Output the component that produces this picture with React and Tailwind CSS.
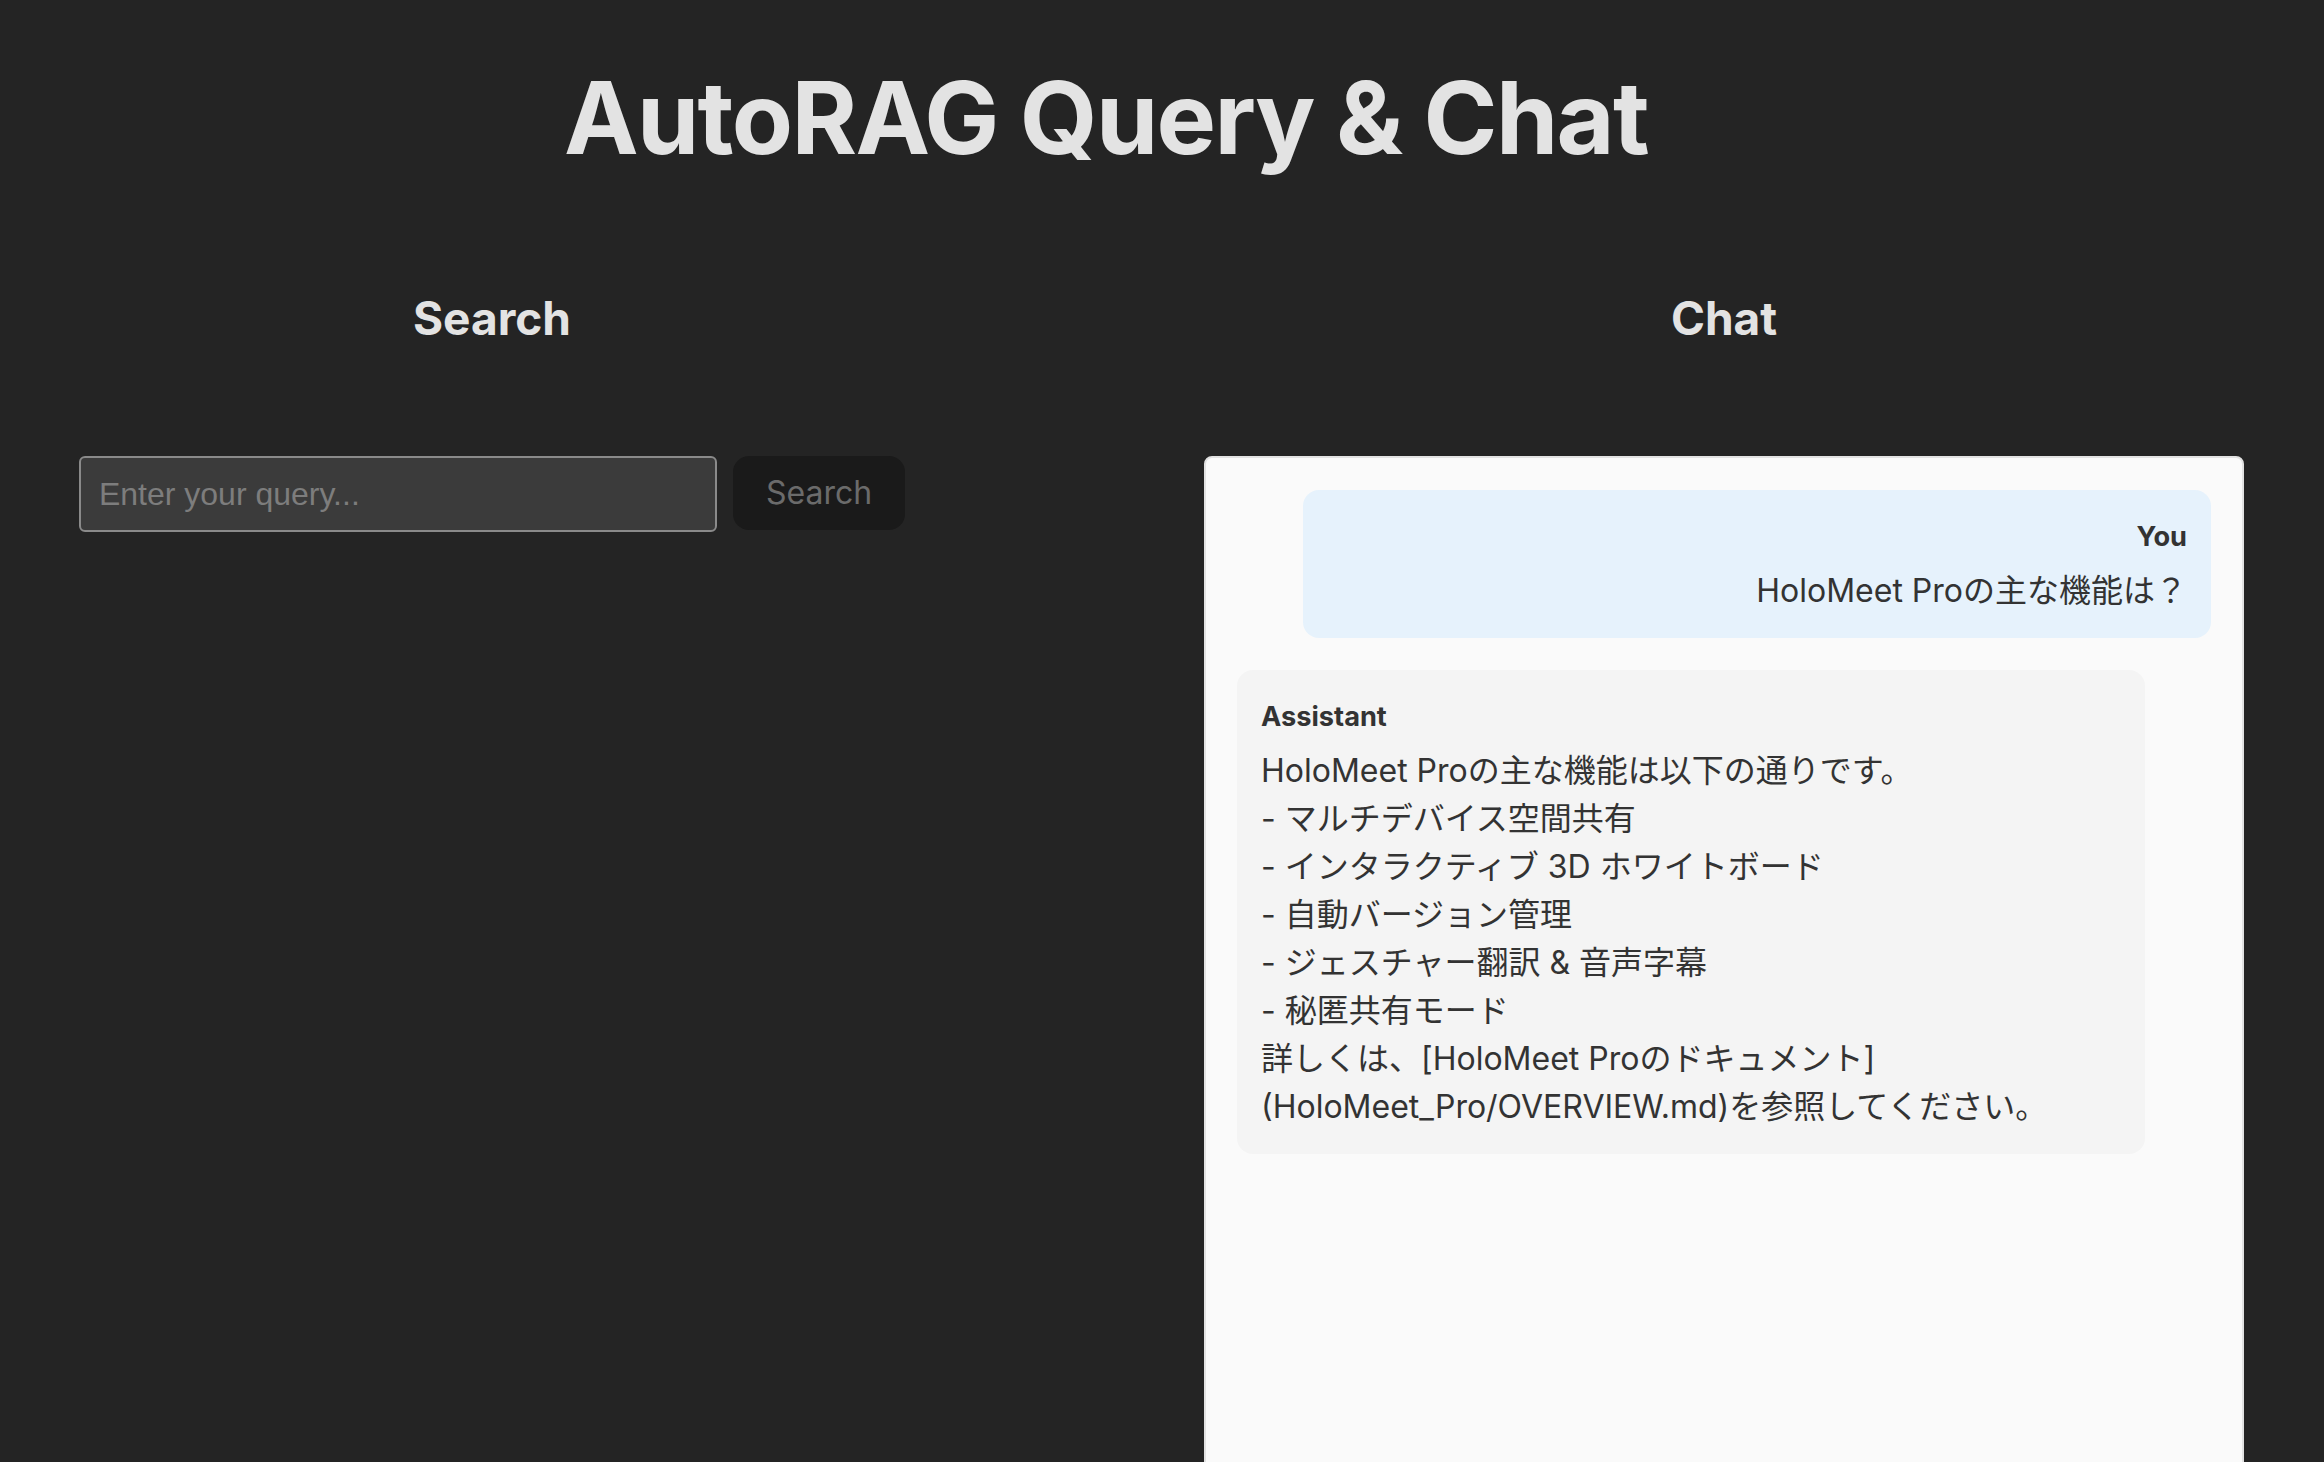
const messages = [
  { role: 'You', lines: ['HoloMeet Proの主な機能は？'] },
  {
    role: 'Assistant',
    lines: [
      'HoloMeet Proの主な機能は以下の通りです。',
      '- マルチデバイス空間共有',
      '- インタラクティブ 3D ホワイトボード',
      '- 自動バージョン管理',
      '- ジェスチャー翻訳 & 音声字幕',
      '- 秘匿共有モード',
      '詳しくは、[HoloMeet Proのドキュメント]',
      '(HoloMeet_Pro/OVERVIEW.md)を参照してください。'
    ]
  }
]

const Bubble = ({ role, lines }) => {
  const isUser = role === 'You'
  return (
    <div
      className={
        isUser
          ? 'self-end w-[908px] rounded-2xl bg-[#e6f2fc] px-6 pt-[27px] pb-[23px] text-right'
          : 'self-start w-[908px] rounded-2xl bg-[#f4f4f4] px-6 pt-[27px] pb-[23px] text-left'
      }
    >
      <div className="mb-[9px] text-[27.2px] font-bold leading-[1.5] text-[#333]">{role}</div>
      <div className="text-[32px] leading-[1.5] text-[#333]">
        {lines.map((line, i) => (
          <div key={i}>{line}</div>
        ))}
      </div>
    </div>
  )
}

export default function App() {
  return (
    <div className="h-screen overflow-hidden bg-[#242424] font-['Inter','Noto_Sans_CJK_JP',sans-serif] text-[#e3e3e3]">
      <div className="w-[2244px]">
        {/* Title */}
        <h1 className="pt-[63px] pr-8 text-center text-[100px] font-bold leading-[1.1] tracking-[-0.016em]">
          AutoRAG Query &amp; Chat
        </h1>

        <div className="mt-[69px] grid grid-cols-[984px_1040px] gap-x-[220px]">
          {/* Search column */}
          <section>
            <h2 className="mt-10 mb-[102px] text-center text-[46px] font-bold leading-[72px]">Search</h2>
            <div className="flex items-start justify-center gap-[16px]">
              <input
                type="text"
                placeholder="Enter your query..."
                className="h-[76px] w-[638px] rounded-[6px] border-2 border-[#8a8a8a] bg-[#3b3b3b] px-[18px] font-['Liberation_Sans',Arial,sans-serif] text-[32px] text-[#e3e3e3] outline-none placeholder:text-[#7d7d7d]"
              />
              <button className="h-[74px] rounded-2xl bg-[#1a1a1a] px-[33px] text-[32px] text-[#6b6b6b]">
                Search
              </button>
            </div>
          </section>

          {/* Chat column */}
          <section>
            <h2 className="mt-10 mb-[102px] text-center text-[46px] font-bold leading-[72px]">Chat</h2>
            <div className="flex h-[1100px] flex-col gap-8 rounded-lg border-2 border-[#e2e2e2] bg-[#fafafa] p-[31px] pt-8">
              {messages.map((m, i) => (
                <Bubble key={i} role={m.role} lines={m.lines} />
              ))}
            </div>
          </section>
        </div>
      </div>
    </div>
  )
}
